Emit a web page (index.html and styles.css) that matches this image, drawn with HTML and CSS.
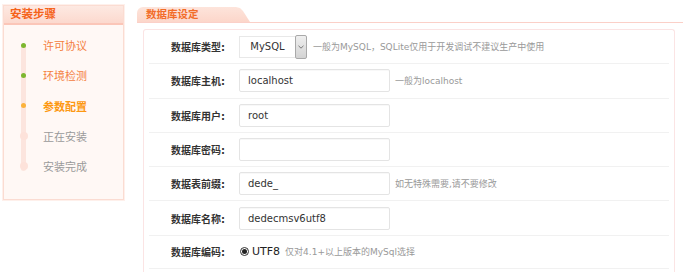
FILE: index.html
```html
<!DOCTYPE html>
<html lang="zh-CN">
<head>
<meta charset="utf-8">
<title>数据库设定</title>
<link rel="stylesheet" href="styles.css">
</head>
<body>
<div class="page">
  <aside class="steps">
    <div class="steps-head">安装步骤</div>
    <ul class="steps-list">
      <li class="done"><span class="dot-col"><span class="dot"></span></span>许可协议</li>
      <li class="done"><span class="dot-col"><span class="dot"></span></span>环境检测</li>
      <li class="current"><span class="dot-col"><span class="dot"></span></span>参数配置</li>
      <li class="todo"><span class="dot-col"><span class="dot"></span></span>正在安装</li>
      <li class="todo"><span class="dot-col"><span class="dot"></span></span>安装完成</li>
    </ul>
  </aside>
  <main class="main">
    <div class="tabbar"><div class="tab">数据库设定</div></div>
    <div class="panel">
      <div class="row">
        <label class="lbl">数据库类型:</label>
        <div class="select">
          <div class="select-box">MySQL</div>
          <div class="select-btn"><svg width="6" height="4" viewBox="0 0 6 4"><path d="M0.5 0.8 L3 3.2 L5.5 0.8" fill="none" stroke="#777" stroke-width="1"/></svg></div>
        </div>
        <span class="hint hint-sel">一般为MySQL，SQLite仅用于开发调试不建议生产中使用</span>
      </div>
      <div class="row">
        <label class="lbl">数据库主机:</label>
        <div class="input">localhost</div>
        <span class="hint">一般为localhost</span>
      </div>
      <div class="row">
        <label class="lbl">数据库用户:</label>
        <div class="input">root</div>
      </div>
      <div class="row">
        <label class="lbl">数据库密码:</label>
        <div class="input"></div>
      </div>
      <div class="row">
        <label class="lbl">数据表前缀:</label>
        <div class="input">dede_</div>
        <span class="hint">如无特殊需要,请不要修改</span>
      </div>
      <div class="row">
        <label class="lbl">数据库名称:</label>
        <div class="input">dedecmsv6utf8</div>
      </div>
      <div class="row row-last">
        <label class="lbl">数据库编码:</label>
        <span class="radio"><span class="radio-dot"></span></span>
        <span class="radio-text">UTF8</span>
        <span class="hint">仅对4.1+以上版本的MySql选择</span>
      </div>
    </div>
  </main>
</div>
</body>
</html>
```
FILE: styles.css
```css
html, body {
  margin: 0;
  padding: 0;
  background: #fff;
}
body {
  font-family: "DejaVu Sans", "Noto Sans CJK SC", sans-serif;
  color: #333;
  overflow: hidden;
}
.page {
  display: flex;
  align-items: flex-start;
  padding-top: 5px;
}

/* ---------- sidebar ---------- */
.steps {
  margin-left: 3px;
  width: 121px;
  box-sizing: border-box;
  border: 1px solid #fbdcd2;
  box-shadow: 0 0 0 1px #fef0eb;
  background: #fff8f5;
}
.steps-head {
  height: 17px;
  line-height: 17px;
  padding-left: 6px;
  background: linear-gradient(#fde9e2, #fcd9ce);
  border-bottom: 2px solid #fbc6b8;
  font-size: 11.5px;
  font-weight: bold;
  color: #f5631a;
}
.steps-list {
  list-style: none;
  margin: 0;
  padding: 5px 0 18px;
  position: relative;
}
.steps-list::before {
  content: "";
  position: absolute;
  left: 17px;
  top: 19px;
  width: 5px;
  height: 127px;
  border-radius: 3px;
  background: #fce5de;
}
.steps-list li {
  height: 30.3px;
  display: flex;
  align-items: center;
  font-size: 11px;
  position: relative;
}
.dot-col {
  width: 39px;
  display: flex;
  justify-content: center;
}
.dot {
  width: 5px;
  height: 5px;
  border-radius: 50%;
}
.done { color: #f4803f; }
.done .dot { background: #7db72f; }
.current { color: #fd9812; font-weight: bold; }
.current .dot { background: #fbb23c; }
.todo { color: #9a9a9a; }
.todo .dot { width: 8px; height: 8px; background: #fde2da; }

/* ---------- main ---------- */
.main {
  flex: 1;
  margin-left: 13px;
}
.tabbar {
  margin-top: 2px;
  height: 15px;
  border-bottom: 1px solid #fbd0c8;
}
.tab {
  width: 104px;
  height: 15px;
  line-height: 15px;
  padding-left: 9px;
  box-sizing: content-box;
  font-size: 10.5px;
  font-weight: bold;
  color: #f26d2a;
  background: linear-gradient(#fde4db, #fcd6ca);
  border-top-left-radius: 6px;
  clip-path: polygon(0 0, 99px 0, 103px 1px, 106px 4px, 113px 15px, 0 15px);
}
.panel {
  margin: 6px 8px 0 6px;
  padding: 0 5px 10px;
  border: 1px solid #fbe4e4;
  border-bottom: none;
  border-radius: 3px 3px 0 0;
}
.row {
  display: flex;
  align-items: center;
  height: 33.3px;
  border-bottom: 1px solid #f1f1f1;
}
.row-last {
  height: 32px;
}
.lbl {
  width: 76px;
  margin-right: 14px;
  text-align: right;
  font-size: 10px;
  font-weight: bold;
  color: #333;
}
.input {
  width: 151px;
  height: 23px;
  box-sizing: border-box;
  padding-left: 8px;
  border: 1px solid #e4e4e4;
  border-radius: 2px;
  box-shadow: inset 0 1px 1px rgba(0, 0, 0, 0.03);
  display: flex;
  align-items: center;
  font-size: 10px;
  color: #333;
  background: #fff;
}
.hint {
  margin-left: 5px;
  font-size: 9px;
  color: #999;
}
.hint-sel {
  margin-left: 6px;
}
.select {
  display: flex;
  align-items: center;
}
.select-box {
  width: 56px;
  height: 22px;
  box-sizing: border-box;
  border: 1px solid #e8e8e8;
  border-right: none;
  display: flex;
  align-items: center;
  justify-content: center;
  font-size: 10px;
  color: #333;
}
.select-btn {
  width: 12px;
  height: 24px;
  box-sizing: border-box;
  border: 1px solid #a9a9a9;
  border-radius: 2px;
  background: linear-gradient(#efefef, #d3d3d3);
  display: flex;
  align-items: center;
  justify-content: center;
}
.radio {
  width: 9px;
  height: 9px;
  box-sizing: border-box;
  margin-left: 1px;
  border: 1px solid #333;
  border-radius: 50%;
  display: flex;
  align-items: center;
  justify-content: center;
}
.radio-dot {
  width: 5px;
  height: 5px;
  border-radius: 50%;
  background: #222;
}
.radio-text {
  margin-left: 3px;
  font-size: 11px;
  color: #222;
}
```
